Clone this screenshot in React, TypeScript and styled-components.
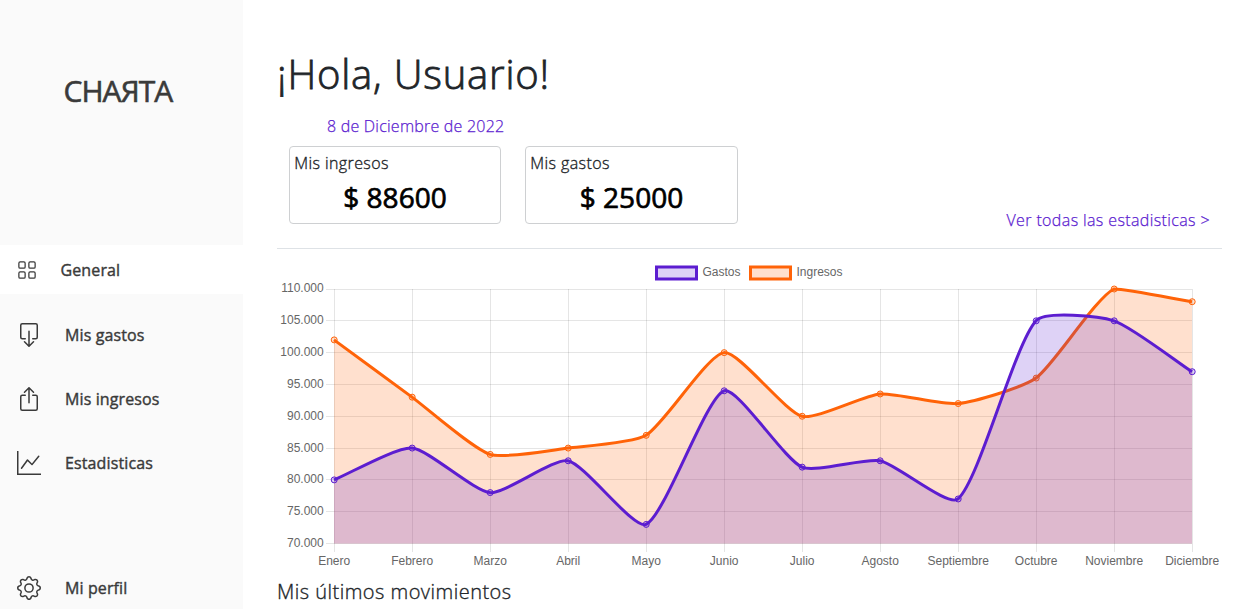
import React from 'react';
import styled, { createGlobalStyle } from 'styled-components';
import { BsGrid, BsBoxArrowDown, BsBoxArrowUp, BsGraphUp, BsGear } from 'react-icons/bs';

const GlobalStyle = createGlobalStyle`
  * { box-sizing: border-box; }
  body {
    margin: 0;
    height: 609px;
    overflow: hidden;
    background: #fff;
    color: #212529;
    font-family: 'Open Sans', sans-serif;
    font-size: 16px;
    line-height: 24px;
  }
`;

const Page = styled.div`
  display: flex;
  height: 609px;
`;

const Sidebar = styled.nav`
  width: 243px;
  flex: none;
  display: flex;
  flex-direction: column;
  background: #fafafa;
  color: #3a3a3a;
`;

const Logo = styled.div`
  height: 245px;
  padding: 68px 0 0 63.5px;
  font-size: 30px;
  line-height: 46px;
  letter-spacing: -0.95px;
  -webkit-text-stroke: 0.6px currentColor;
`;

const NavItem = styled.a<{ $active?: boolean; $top?: number }>`
  display: flex;
  flex: none;
  align-items: center;
  height: ${p => (p.$active ? 49 : 24)}px;
  margin-top: ${p => p.$top ?? 0}px;
  padding-left: ${p => (p.$active ? 16.5 : 17)}px;
  gap: 24px;
  background: ${p => (p.$active ? '#fff' : 'transparent')};
  letter-spacing: 0.12px;
  -webkit-text-stroke: 0.4px currentColor;
`;

const Main = styled.main`
  flex: 1;
  padding: 50px 17px 0 34px;
  display: flex;
  flex-direction: column;
`;

const Title = styled.h1`
  margin: 0;
  font-size: 40px;
  line-height: 48px;
  font-weight: 300;
  letter-spacing: 0.8px;
  -webkit-text-stroke: 0.8px currentColor;
`;

const DateText = styled.p`
  margin: 16px 0 8px 50px;
  color: #5c1dd0;
  font-weight: 300;
  letter-spacing: 0.22px;
  -webkit-text-stroke: 0.25px currentColor;
`;

const Summary = styled.section`
  display: flex;
  align-items: flex-start;
  padding-left: 12px;
  height: 103px;
  border-bottom: 1px solid #dee2e6;
`;

const Card = styled.article<{ $width: number }>`
  width: ${p => p.$width}px;
  height: 78px;
  margin-right: 24px;
  padding: 4px;
  border: 1px solid #ced0d2;
  border-radius: 4px;
`;

const CardLabel = styled.div`
  font-weight: 300;
  letter-spacing: 0.4px;
  padding-left: 0.3px;
  -webkit-text-stroke: 0.35px currentColor;
`;

const Amount = styled.div`
  color: #000;
  font-size: 28px;
  line-height: 44px;
  text-align: center;
  -webkit-text-stroke: 0.7px currentColor;
`;

const StatsLink = styled.a`
  margin: 62px 12px 0 auto;
  color: #5c1dd0;
  font-weight: 300;
  letter-spacing: 0.38px;
  -webkit-text-stroke: 0.25px currentColor;
`;

const Chart = styled.svg`
  display: block;
  width: 945px;
  height: 331px;
  font: 12px 'Liberation Sans', Arial, sans-serif;
`;

const Subtitle = styled.h2`
  margin: 0;
  font-size: 20px;
  line-height: 24px;
  font-weight: 300;
  letter-spacing: 0.48px;
  -webkit-text-stroke: 0.35px currentColor;
`;

const months = ['Enero', 'Febrero', 'Marzo', 'Abril', 'Mayo', 'Junio', 'Julio', 'Agosto', 'Septiembre', 'Octubre', 'Noviembre', 'Diciembre'];
const ticks = [110, 105, 100, 95, 90, 85, 80, 75, 70];

const LEFT = 57;
const RIGHT = 915;
const TOP = 40;
const BOTTOM = 294.5;
const TENSION = 0.2;

const series = [
  { name: 'Ingresos', color: '#ff6308', fill: 'rgba(255,99,8,0.2)', values: [102, 93, 84, 85, 87, 100, 90, 93.5, 92, 96, 110, 108] },
  { name: 'Gastos', color: '#5c1dd0', fill: 'rgba(92,29,208,0.2)', values: [80, 85, 78, 83, 73, 94, 82, 83, 77, 105, 105, 97] },
];

const xAt = (i: number) => LEFT + i * 78;
const yAt = (v: number) => BOTTOM - ((v - 70) / 40) * (BOTTOM - TOP);
const clampY = (y: number) => Math.min(BOTTOM, Math.max(TOP, y));

function curve(values: number[]) {
  const pts = values.map((v, i) => ({ x: xAt(i), y: yAt(v) }));
  const controls = pts.map((p, i) => {
    const prev = pts[i - 1] ?? p;
    const next = pts[i + 1] ?? p;
    const d1 = Math.hypot(p.x - prev.x, p.y - prev.y);
    const d2 = Math.hypot(next.x - p.x, next.y - p.y);
    const a = (TENSION * d1) / (d1 + d2);
    const b = (TENSION * d2) / (d1 + d2);
    return {
      inX: p.x - a * (next.x - prev.x),
      inY: clampY(p.y - a * (next.y - prev.y)),
      outX: p.x + b * (next.x - prev.x),
      outY: clampY(p.y + b * (next.y - prev.y)),
    };
  });
  return pts.reduce((d, p, i) => {
    if (i === 0) return `M${p.x} ${p.y}`;
    const o = controls[i - 1];
    const c = controls[i];
    return `${d}C${o.outX} ${o.outY} ${c.inX} ${c.inY} ${p.x} ${p.y}`;
  }, '');
}

function LineChart() {
  return (
    <Chart viewBox="0 0 945 331">
      <g stroke="rgba(0,0,0,0.1)">
        {ticks.map(t => {
          const y = Math.floor(yAt(t)) + 0.5;
          return <line key={t} x1={49} x2={RIGHT} y1={y} y2={y} />;
        })}
        {months.map((m, i) => (
          <line key={m} x1={xAt(i) + 0.5} x2={xAt(i) + 0.5} y1={TOP} y2={303} />
        ))}
      </g>
      <g fill="#666">
        {ticks.map(t => (
          <text key={t} x={46.7} y={Math.ceil(yAt(t) - 0.6) + (t === 110 ? 3 : 4) - (yAt(t) % 1 > 0.6 ? 1 : 0)} textAnchor="end">{t}.000</text>
        ))}
        {months.map((m, i) => (
          <text key={m} x={xAt(i) + 0.2} y={316} textAnchor="middle">{m}</text>
        ))}
        <text x={425.5} y={27}>Gastos</text>
        <text x={519.5} y={27}>Ingresos</text>
      </g>
      <rect x={379.5} y={18} width={40} height={12} fill={series[1].fill} stroke={series[1].color} strokeWidth={3} />
      <rect x={473.5} y={18} width={40} height={12} fill={series[0].fill} stroke={series[0].color} strokeWidth={3} />
      {series.map(s => {
        const d = curve(s.values);
        return (
          <g key={s.name}>
            <path d={`${d}V${BOTTOM}H${LEFT}Z`} fill={s.fill} />
            <path d={d} fill="none" stroke={s.color} strokeWidth={3} />
            {s.values.map((v, i) => (
              <circle key={i} cx={xAt(i) + 0.2} cy={yAt(v)} r={3} fill={s.fill} stroke={s.color} />
            ))}
          </g>
        );
      })}
    </Chart>
  );
}

export default function App() {
  return (
    <>
      <GlobalStyle />
      <Page>
        <Sidebar>
          <Logo>CHAЯTA</Logo>
          <NavItem $active><BsGrid size={20} />General</NavItem>
          <NavItem $top={29}><BsBoxArrowDown size={24} />Mis gastos</NavItem>
          <NavItem $top={40}><BsBoxArrowUp size={24} />Mis ingresos</NavItem>
          <NavItem $top={40}><BsGraphUp size={24} />Estadisticas</NavItem>
          <NavItem $top={101}><BsGear size={24} />Mi perfil</NavItem>
        </Sidebar>
        <Main>
          <Title>¡Hola, Usuario!</Title>
          <DateText>8 de Diciembre de 2022</DateText>
          <Summary>
            <Card $width={212}><CardLabel>Mis ingresos</CardLabel><Amount>$ 88600</Amount></Card>
            <Card $width={213}><CardLabel>Mis gastos</CardLabel><Amount>$ 25000</Amount></Card>
            <StatsLink>Ver todas las estadisticas &gt;</StatsLink>
          </Summary>
          <LineChart />
          <Subtitle>Mis últimos movimientos</Subtitle>
        </Main>
      </Page>
    </>
  );
}
